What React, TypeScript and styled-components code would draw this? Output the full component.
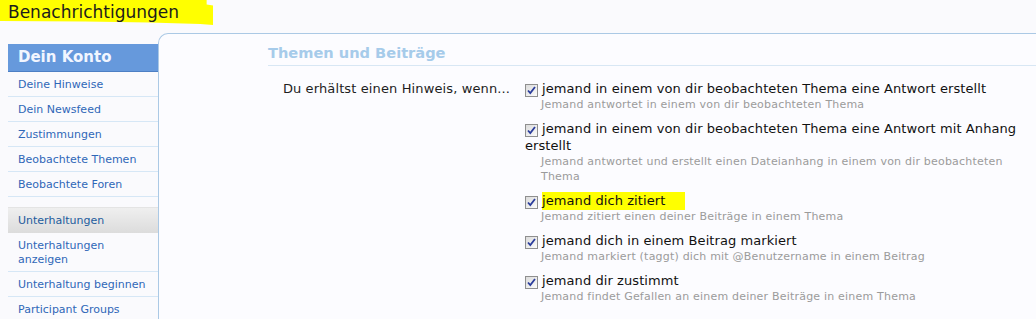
import React from "react";
import styled, { createGlobalStyle } from "styled-components";

const GlobalStyle = createGlobalStyle`
  html, body {
    margin: 0;
    padding: 0;
    background: #fafafd;
    font-family: "DejaVu Sans", Verdana, sans-serif;
    color: #1e1e1e;
  }
  * { box-sizing: border-box; }
`;

const Page = styled.div`
  width: 1036px;
  height: 319px;
  overflow: hidden;
`;

const TitleMark = styled.h1`
  display: inline-block;
  margin: 0;
  height: 25px;
  padding: 0 34px 0 8px;
  font-size: 17px;
  font-weight: normal;
  line-height: 24px;
  color: #1c1c1c;
  background: #ffff00;
  clip-path: polygon(0 0, 97% 0, 97% 18%, 100% 22%, 100% 100%, 94% 96%, 70% 90%, 40% 86%, 0 84%);
`;

const Layout = styled.div`
  display: flex;
  margin-top: 8px;
`;

const Sidebar = styled.nav`
  width: 150px;
  margin-left: 8px;
  margin-top: 11px;
  flex-shrink: 0;
`;

const SideHead = styled.div`
  height: 28px;
  padding-left: 10px;
  background: #6699dc;
  border-bottom: 1px solid #4d7fc4;
  color: #f2f6ff;
  font-size: 15px;
  font-weight: bold;
  line-height: 27px;
`;

const SideGroup = styled.div`
  height: 26px;
  margin-top: 10px;
  padding: 1px 0 0 10px;
  background: linear-gradient(#efefef, #dcdcdc);
  border-top: 1px solid #e4e4e4;
  color: #1d5c9d;
  font-size: 11px;
  line-height: 24px;
`;

const SideLink = styled.a`
  display: block;
  padding: 6px 10px 4px 10px;
  border-bottom: 1px solid #d6e7f6;
  color: #2f67b8;
  font-size: 11px;
  line-height: 14px;
  text-decoration: none;
`;

const Panel = styled.main`
  flex: 1;
  min-height: 300px;
  background: #fcfcff;
  border-top: 1px solid #abc9e5;
  border-left: 1px solid #abc9e5;
  border-top-left-radius: 10px;
  padding: 9px 0 0 109px;
`;

const Heading = styled.h3`
  margin: 0 0 14px 0;
  padding-bottom: 2px;
  border-bottom: 1px solid #d8e7f4;
  color: #a6cbea;
  font-size: 14.6px;
  font-weight: bold;
  line-height: 20px;
`;

const FormRow = styled.div`
  display: grid;
  grid-template-columns: 242px 1fr;
  column-gap: 15px;
  width: 760px;
`;

const Label = styled.div`
  text-align: right;
  font-size: 13px;
  line-height: 17px;
  letter-spacing: 0.12px;
  color: #1e1e1e;
`;

const Options = styled.ul`
  list-style: none;
  margin: 0;
  padding: 0;
  display: flex;
  flex-direction: column;
  gap: 8px;
`;

const Option = styled.li`
  font-size: 13px;
  line-height: 17px;
  letter-spacing: 0.08px;
  color: #111;
`;

const Marked = styled.span<{ $on?: boolean }>`
  background: ${(p) => (p.$on ? "#ffff00" : "transparent")};
  padding-right: ${(p) => (p.$on ? "20px" : "0")};
  padding-top: 1px;
  padding-bottom: 2px;
`;

const Hint = styled.div`
  padding-left: 16px;
  color: #9b9b9b;
  font-size: 11px;
  line-height: 15px;
  letter-spacing: 0.2px;
`;

const Box = styled.span`
  display: inline-flex;
  align-items: center;
  justify-content: center;
  width: 13px;
  height: 13px;
  margin-right: 4px;
  vertical-align: -2px;
  border: 1px solid #8f8f8f;
  background: linear-gradient(135deg, #dcdcdc, #fbfbfb);
`;

const Check = () => (
  <Box>
    <svg width="9" height="9" viewBox="0 0 9 9">
      <path d="M1 4.5 L3.3 7 L8 1" fill="none" stroke="#2a3c9c" strokeWidth="1.8" />
    </svg>
  </Box>
);

const sideTop = ["Deine Hinweise", "Dein Newsfeed", "Zustimmungen", "Beobachtete Themen", "Beobachtete Foren"];
const sideConv = ["Unterhaltungen anzeigen", "Unterhaltung beginnen", "Participant Groups"];

const alerts = [
  {
    text: "jemand in einem von dir beobachteten Thema eine Antwort erstellt",
    hint: "Jemand antwortet in einem von dir beobachteten Thema",
  },
  {
    text: "jemand in einem von dir beobachteten Thema eine Antwort mit Anhang erstellt",
    hint: "Jemand antwortet und erstellt einen Dateianhang in einem von dir beobachteten Thema",
  },
  {
    text: "jemand dich zitiert",
    hint: "Jemand zitiert einen deiner Beiträge in einem Thema",
    marked: true,
  },
  {
    text: "jemand dich in einem Beitrag markiert",
    hint: "Jemand markiert (taggt) dich mit @Benutzername in einem Beitrag",
  },
  {
    text: "jemand dir zustimmt",
    hint: "Jemand findet Gefallen an einem deiner Beiträge in einem Thema",
  },
];

export default function App() {
  return (
    <Page>
      <GlobalStyle />
      <TitleMark>Benachrichtigungen</TitleMark>
      <Layout>
        <Sidebar>
          <SideHead>Dein Konto</SideHead>
          {sideTop.map((s) => (
            <SideLink key={s}>{s}</SideLink>
          ))}
          <SideGroup>Unterhaltungen</SideGroup>
          {sideConv.map((s) => (
            <SideLink key={s}>{s}</SideLink>
          ))}
        </Sidebar>
        <Panel>
          <Heading>Themen und Beiträge</Heading>
          <FormRow>
            <Label>Du erhältst einen Hinweis, wenn...</Label>
            <Options>
              {alerts.map((a) => (
                <Option key={a.text}>
                  <Check />
                  <Marked $on={a.marked}>{a.text}</Marked>
                  <Hint>{a.hint}</Hint>
                </Option>
              ))}
            </Options>
          </FormRow>
        </Panel>
      </Layout>
    </Page>
  );
}
